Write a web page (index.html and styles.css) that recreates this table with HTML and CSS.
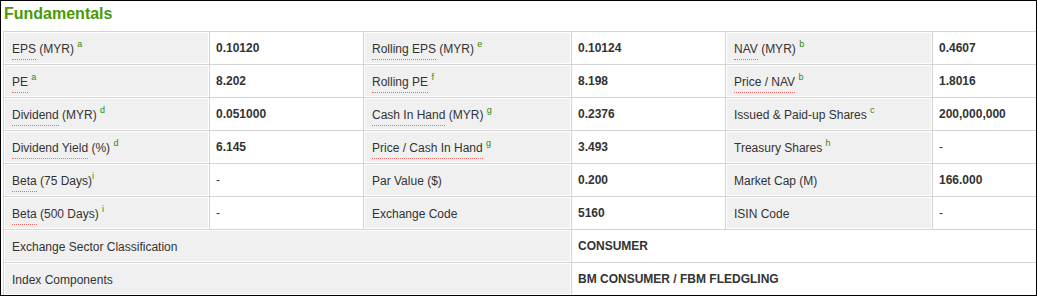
FILE: index.html
```html
<!DOCTYPE html>
<html>
<head>
<meta charset="utf-8">
<link rel="stylesheet" href="styles.css">
</head>
<body>
<div class="panel">
  <h2 class="title">Fundamentals</h2>
  <table class="fund">
    <colgroup>
      <col class="c1"><col class="c2"><col class="c3"><col class="c4"><col class="c5"><col class="c6">
    </colgroup>
    <tr>
      <td class="lbl"><span class="abbr">EPS</span> (MYR) <sup>a</sup></td>
      <td class="val">0.10120</td>
      <td class="lbl"><span class="abbr">Rolling EPS</span> (MYR) <sup>e</sup></td>
      <td class="val">0.10124</td>
      <td class="lbl"><span class="abbr">NAV</span> (MYR) <sup>b</sup></td>
      <td class="val">0.4607</td>
    </tr>
    <tr>
      <td class="lbl"><span class="abbr">PE</span> <sup>a</sup></td>
      <td class="val">8.202</td>
      <td class="lbl"><span class="abbr">Rolling PE</span> <sup>f</sup></td>
      <td class="val">8.198</td>
      <td class="lbl"><span class="abbr">Price / NAV</span> <sup>b</sup></td>
      <td class="val">1.8016</td>
    </tr>
    <tr>
      <td class="lbl"><span class="abbr">Dividend</span> (MYR) <sup>d</sup></td>
      <td class="val">0.051000</td>
      <td class="lbl"><span class="abbr">Cash In Hand</span> (MYR) <sup>g</sup></td>
      <td class="val">0.2376</td>
      <td class="lbl">Issued &amp; Paid-up Shares <sup>c</sup></td>
      <td class="val">200,000,000</td>
    </tr>
    <tr>
      <td class="lbl"><span class="abbr">Dividend Yield</span> (%) <sup>d</sup></td>
      <td class="val">6.145</td>
      <td class="lbl"><span class="abbr">Price / Cash In Hand</span> <sup>g</sup></td>
      <td class="val">3.493</td>
      <td class="lbl">Treasury Shares <sup>h</sup></td>
      <td class="val plain">-</td>
    </tr>
    <tr>
      <td class="lbl"><span class="abbr">Beta</span> (75 Days)<sup>i</sup></td>
      <td class="val plain">-</td>
      <td class="lbl">Par Value ($)</td>
      <td class="val">0.200</td>
      <td class="lbl">Market Cap (M)</td>
      <td class="val">166.000</td>
    </tr>
    <tr>
      <td class="lbl"><span class="abbr">Beta</span> (500 Days) <sup>i</sup></td>
      <td class="val plain">-</td>
      <td class="lbl">Exchange Code</td>
      <td class="val">5160</td>
      <td class="lbl">ISIN Code</td>
      <td class="val plain">-</td>
    </tr>
    <tr>
      <td class="lbl" colspan="3">Exchange Sector Classification</td>
      <td class="val" colspan="3">CONSUMER</td>
    </tr>
    <tr>
      <td class="lbl" colspan="3">Index Components</td>
      <td class="val" colspan="3">BM CONSUMER / FBM FLEDGLING</td>
    </tr>
  </table>
</div>
</body>
</html>
```
FILE: styles.css
```css
html, body {
  margin: 0;
  padding: 0;
  background: #fff;
}
body {
  font-family: "Liberation Sans", Arial, sans-serif;
  color: #333;
}
.panel {
  box-sizing: border-box;
  width: 1037px;
  height: 296px;
  border: 1px solid #000;
  padding: 0 0 0 2px;
  overflow: hidden;
}
.title {
  margin: 0;
  height: 30px;
  padding: 4px 0 0 1px;
  box-sizing: border-box;
  font-size: 16px;
  line-height: 17px;
  font-weight: bold;
  color: #4c9a00;
}
.fund {
  width: 1033px;
  border-collapse: collapse;
  table-layout: fixed;
}
.c1 { width: 206px; }
.c2 { width: 154px; }
.c3 { width: 208px; }
.c4 { width: 154px; }
.c5 { width: 207px; }
.c6 { width: 104px; }
.fund td {
  height: 33px;
  box-sizing: border-box;
  border: 1px solid #d4d4d4;
  padding: 2px 0 0 8px;
  font-size: 12px;
  line-height: 14px;
  vertical-align: middle;
  white-space: nowrap;
}
.fund td.lbl {
  background: #f0f0f0;
  box-shadow: inset 0 0 0 1px #fff;
  color: #333;
}
.fund td.val {
  font-weight: bold;
  color: #333;
  padding-left: 6px;
  padding-top: 0;
}
.fund td.plain {
  font-weight: normal;
}
.abbr {
  border-bottom: 1px dotted #f06a6a;
  padding-bottom: 3px;
}
.fund sup {
  font-size: 9px;
  line-height: 0;
  color: #2e8b00;
  vertical-align: 6px;
}
```
